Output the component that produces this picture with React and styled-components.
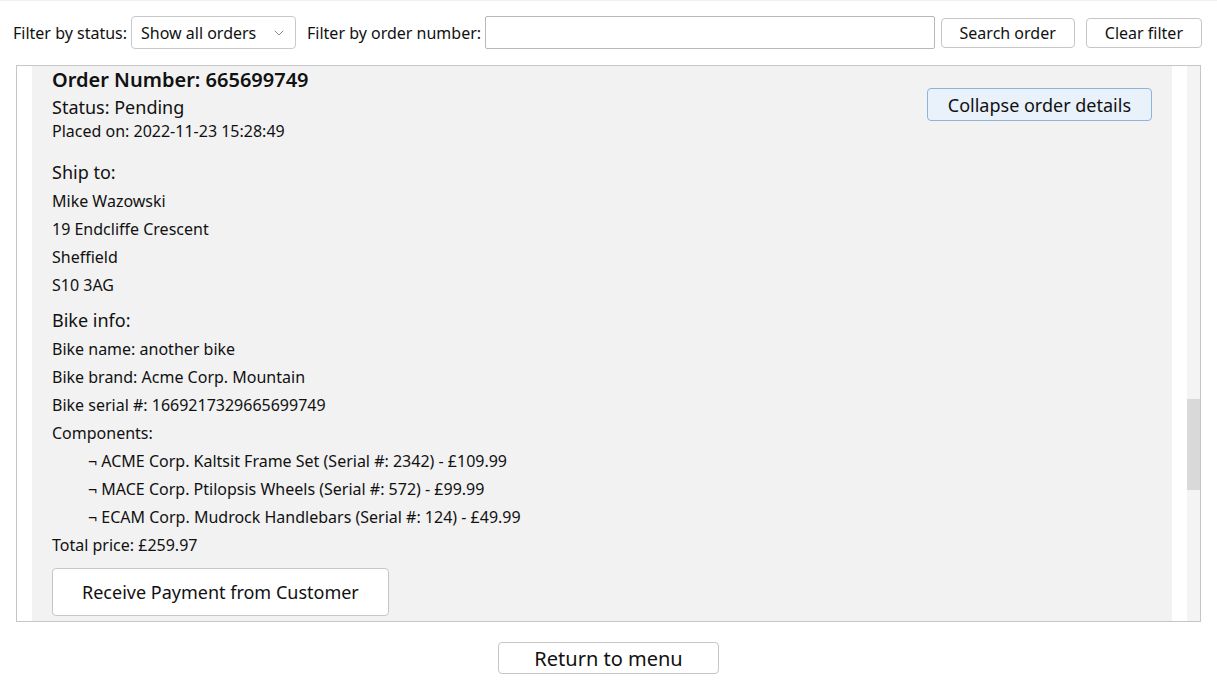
import React from 'react'
import styled, { createGlobalStyle } from 'styled-components'
import { ChevronDown } from 'lucide-react'

const GlobalStyle = createGlobalStyle`
  html, body {
    margin: 0;
    padding: 0;
    background: #fff;
  }
  body {
    font-family: "Noto Sans", "Open Sans", sans-serif;
    color: #111;
    border-top: 1px solid #f0f0f0;
  }
`

const Page = styled.div`
  display: flex;
  flex-direction: column;
`

const Toolbar = styled.div`
  display: flex;
  align-items: center;
  height: 33px;
  padding: 15px 15px 0 13px;
`

const Label = styled.label`
  font-size: 16px;
  margin-right: 4px;
  white-space: nowrap;
`

const SelectWrap = styled.div`
  position: relative;
  margin-right: 11px;

  svg {
    position: absolute;
    right: 9px;
    top: 9px;
    color: #777;
    pointer-events: none;
  }
`

const Select = styled.select`
  appearance: none;
  width: 165px;
  height: 33px;
  padding: 0 9px;
  font-family: inherit;
  font-size: 16px;
  color: #111;
  background: #fff;
  border: 1px solid #c9c9c9;
  border-radius: 4px;
`

const SearchInput = styled.input`
  flex: 1;
  height: 33px;
  box-sizing: border-box;
  border: 1px solid #b8b8b8;
  border-radius: 2px;
  margin-right: 6px;
  font-family: inherit;
  font-size: 16px;
`

const Button = styled.button`
  font-family: inherit;
  font-size: ${(p) => p.size || 16}px;
  color: #111;
  background: ${(p) => (p.active ? '#e9f1fb' : '#fff')};
  border: 1px solid ${(p) => (p.active ? '#8db3de' : '#c6c6c6')};
  border-radius: 4px;
  height: ${(p) => p.h || 30}px;
  padding: 0 ${(p) => p.pad || 18}px;
  margin-left: ${(p) => p.gap || 0}px;
  white-space: nowrap;
  cursor: pointer;
`

const OrderPanel = styled.div`
  display: flex;
  margin: 16px 16px 0 16px;
  height: 557px;
  box-sizing: border-box;
  border: 1px solid #c6c6c6;
`

const Viewport = styled.div`
  flex: 1;
  overflow: hidden;
  padding: 0 15px;
`

const ScrollTrack = styled.div`
  width: 13px;
  background: #f4f4f4;
  display: flex;
  flex-direction: column;
`

const ScrollThumb = styled.div`
  margin-top: 333px;
  height: 91px;
  background: #d9d9d9;
`

const Card = styled.div`
  display: flex;
  justify-content: space-between;
  align-items: flex-start;
  background: #f2f2f2;
  padding: 0 20px 20px;
`

const Details = styled.div`
  display: flex;
  flex-direction: column;
`

const OrderTitle = styled.h2`
  margin: 0;
  font-size: 20px;
  font-weight: 600;
  line-height: 28px;
`

const Status = styled.div`
  font-size: 18px;
  line-height: 26px;
`

const Placed = styled.div`
  font-size: 16px;
  line-height: 22px;
`

const SectionTitle = styled.h3`
  margin: ${(p) => p.top}px 0 3px;
  font-size: 18px;
  font-weight: 400;
  line-height: 24px;
`

const Line = styled.div`
  font-size: 16px;
  line-height: 28px;
  padding-left: ${(p) => (p.indent ? 36 : 0)}px;
`

const CardAction = styled.div`
  padding-top: 22px;
`

const PayRow = styled.div`
  margin-top: 9px;
`

const Footer = styled.div`
  display: flex;
  justify-content: center;
  padding-top: 20px;
`

const ReturnButton = styled(Button)`
  width: 221px;
  height: 32px;
  font-size: 20px;
  padding: 0;
`

const order = {
  number: '665699749',
  status: 'Pending',
  placed: '2022-11-23 15:28:49',
  address: ['Mike Wazowski', '19 Endcliffe Crescent', 'Sheffield', 'S10 3AG'],
  bike: {
    name: 'another bike',
    brand: 'Acme Corp. Mountain',
    serial: '1669217329665699749',
  },
  components: [
    'ACME Corp. Kaltsit Frame Set (Serial #: 2342) - £109.99',
    'MACE Corp. Ptilopsis Wheels (Serial #: 572) - £99.99',
    'ECAM Corp. Mudrock Handlebars (Serial #: 124) - £49.99',
  ],
  total: '£259.97',
}

const OrderCard = ({ order }) => (
  <Card>
    <Details>
      <OrderTitle>Order Number: {order.number}</OrderTitle>
      <Status>Status: {order.status}</Status>
      <Placed>Placed on: {order.placed}</Placed>

      <SectionTitle top={18}>Ship to:</SectionTitle>
      {order.address.map((a) => (
        <Line key={a}>{a}</Line>
      ))}

      <SectionTitle top={9}>Bike info:</SectionTitle>
      <Line>Bike name: {order.bike.name}</Line>
      <Line>Bike brand: {order.bike.brand}</Line>
      <Line>Bike serial #: {order.bike.serial}</Line>
      <Line>Components:</Line>
      {order.components.map((c) => (
        <Line indent key={c}>¬ {c}</Line>
      ))}
      <Line>Total price: {order.total}</Line>
      <PayRow>
        <Button size={18} h={48} pad={29}>Receive Payment from Customer</Button>
      </PayRow>
    </Details>
    <CardAction>
      <Button active size={18} h={33} pad={20}>Collapse order details</Button>
    </CardAction>
  </Card>
)

export default function App() {
  return (
    <Page>
      <GlobalStyle />
      <Toolbar>
        <Label>Filter by status:</Label>
        <SelectWrap>
          <Select defaultValue="all">
            <option value="all">Show all orders</option>
            <option value="pending">Pending</option>
            <option value="paid">Paid</option>
            <option value="dispatched">Dispatched</option>
          </Select>
          <ChevronDown size={16} strokeWidth={1.3} />
        </SelectWrap>
        <Label>Filter by order number:</Label>
        <SearchInput type="text" />
        <Button>Search order</Button>
        <Button gap={11}>Clear filter</Button>
      </Toolbar>

      <OrderPanel>
        <Viewport>
          <OrderCard order={order} />
        </Viewport>
        <ScrollTrack>
          <ScrollThumb />
        </ScrollTrack>
      </OrderPanel>

      <Footer>
        <ReturnButton>Return to menu</ReturnButton>
      </Footer>
    </Page>
  )
}
